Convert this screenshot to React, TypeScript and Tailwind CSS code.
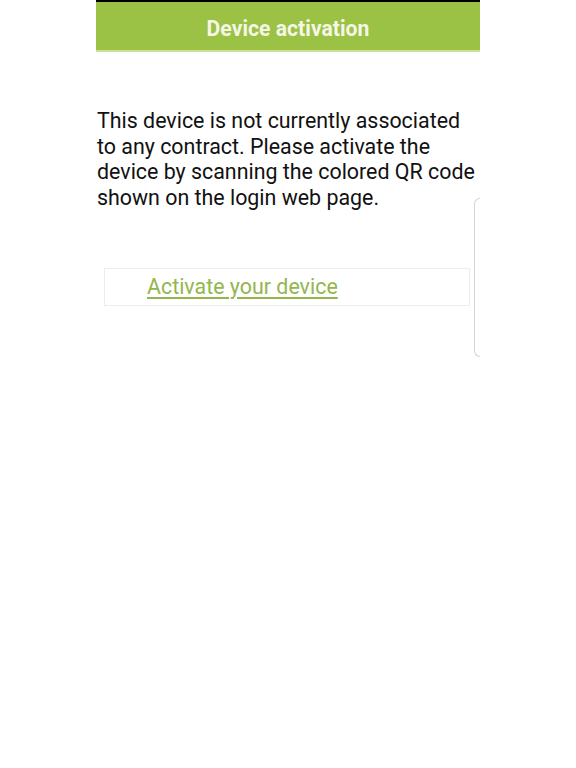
export default function App() {
  return (
    <div className="min-h-[768px] w-full bg-white font-['Roboto',sans-serif]">
      <div className="relative mx-auto min-h-[768px] w-[384px] bg-white">
        <div className="h-[2px] bg-black" />
        <header className="flex h-[50px] items-center justify-center border-b-2 border-[#c9e09a] bg-[#9bc145] pt-[6px]">
          <h1 className="text-[21.2px] font-bold text-[#f3f7e4]">Device activation</h1>
        </header>

        <p className="mt-[56px] pl-[1px] text-[21.4px] leading-[25.7px] text-[#111]">
          This device is not currently associated to any contract. Please activate the device by scanning the colored QR code
          shown on the login web page.
        </p>

        <div className="mt-[57px] ml-[8px] mr-[10px] flex h-[38px] items-center border border-[#ecefe2] pl-[42px]">
          <a href="#" className="text-[21.4px] text-[#93b64e] underline underline-offset-[3px]">
            Activate your device
          </a>
        </div>

        <div className="absolute right-0 top-[198px] h-[159px] w-[6px] rounded-l-[6px] border-y border-l border-[#d4d4d4]" />
      </div>
    </div>
  )
}
